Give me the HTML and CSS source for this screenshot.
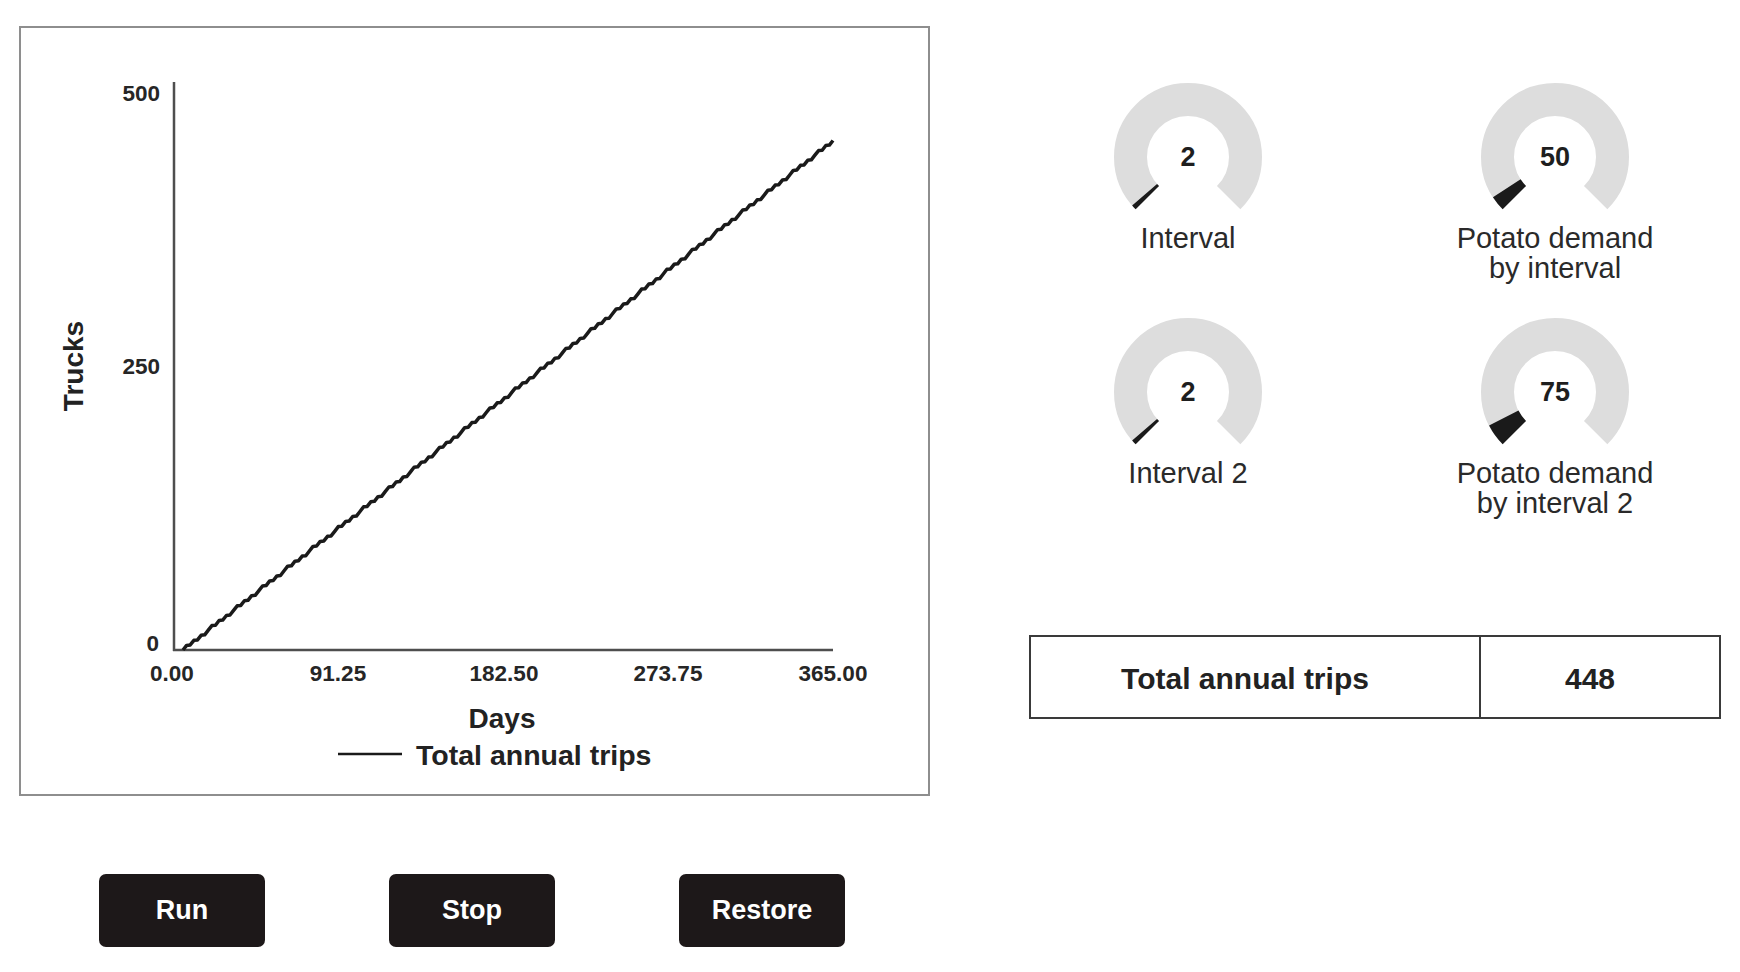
FILE: index.html
```html
<!DOCTYPE html>
<html lang="en">
<head>
  <meta charset="UTF-8" />
  <title>Potato trucks</title>
  <link rel="stylesheet" href="styles.css">
</head>
<body>
  <div class="layout">
    <div class="left-col">
      <div class="chart-box">
        <svg class="chart" width="907" height="766" viewBox="0 0 907 766">
          <line class="axis" x1="153" y1="54" x2="153" y2="623" />
          <line class="axis" x1="152" y1="622" x2="812" y2="622" />

          <text class="tick" x="139" y="65" text-anchor="end">500</text>
          <text class="tick" x="139" y="338" text-anchor="end">250</text>
          <text class="tick" x="138" y="615" text-anchor="end">0</text>

          <text class="tick" x="151" y="645" text-anchor="middle">0.00</text>
          <text class="tick" x="317" y="645" text-anchor="middle">91.25</text>
          <text class="tick" x="483" y="645" text-anchor="middle">182.50</text>
          <text class="tick" x="647" y="645" text-anchor="middle">273.75</text>
          <text class="tick" x="812" y="645" text-anchor="middle">365.00</text>

          <path id="tripsLine" class="series" d="M162 622 L813 113" />

          <text class="axis-title" text-anchor="middle" transform="translate(52 338) rotate(-90)">Trucks</text>
          <text class="axis-title" x="481" y="690" text-anchor="middle">Days</text>

          <line class="series legend-key" x1="317" y1="726" x2="381" y2="726" />
          <text class="legend" x="395" y="727">Total annual trips</text>
        </svg>
      </div>

      <div class="controls">
        <button class="btn">Run</button>
        <button class="btn">Stop</button>
        <button class="btn">Restore</button>
      </div>
    </div>

    <div class="right-col">
      <div class="gauges">
        <div class="gauge">
          <svg class="dial" width="150" height="140" viewBox="0 0 150 140">
            <path class="track" d="M34.34 114.66 A57.5 57.5 0 1 1 115.66 114.66" />
            <path class="fill" d="M34.34 114.66 A57.5 57.5 0 0 1 31.60 111.72" />
            <text class="dial-value" x="75" y="74">2</text>
          </svg>
          <div class="gauge-label">Interval</div>
        </div>

        <div class="gauge">
          <svg class="dial" width="150" height="140" viewBox="0 0 150 140">
            <path class="track" d="M34.34 114.66 A57.5 57.5 0 1 1 115.66 114.66" />
            <path class="fill" d="M34.34 114.66 A57.5 57.5 0 0 1 26.78 105.31" />
            <text class="dial-value" x="75" y="74">50</text>
          </svg>
          <div class="gauge-label">Potato demand<br>by interval</div>
        </div>

        <div class="gauge">
          <svg class="dial" width="150" height="140" viewBox="0 0 150 140">
            <path class="track" d="M34.34 114.66 A57.5 57.5 0 1 1 115.66 114.66" />
            <path class="fill" d="M34.34 114.66 A57.5 57.5 0 0 1 31.60 111.72" />
            <text class="dial-value" x="75" y="74">2</text>
          </svg>
          <div class="gauge-label">Interval 2</div>
        </div>

        <div class="gauge">
          <svg class="dial" width="150" height="140" viewBox="0 0 150 140">
            <path class="track" d="M34.34 114.66 A57.5 57.5 0 1 1 115.66 114.66" />
            <path class="fill" d="M34.34 114.66 A57.5 57.5 0 0 1 23.77 100.11" />
            <text class="dial-value" x="75" y="74">75</text>
          </svg>
          <div class="gauge-label">Potato demand<br>by interval 2</div>
        </div>
      </div>

      <div class="total-table">
        <div class="cell cell-name">Total annual trips</div>
        <div class="cell cell-value">448</div>
      </div>
    </div>
  </div>

  <script>
    // cumulative trips: day 0..365 mapped onto the plot area
    function buildTrips() {
      const px = d => 153 + d * 659 / 365;
      const py = v => 622 - v * 568 / 500;
      const pts = [];
      for (let d = 5; d <= 365; d += 2) {
        const v = (d - 5) * 448 / 360;
        const wobble = (((d * 37) % 7) - 3) * 0.6;
        pts.push(px(d).toFixed(1) + ' ' + (py(v) + wobble).toFixed(1));
      }
      pts[0] = '162 622';
      document.getElementById('tripsLine').setAttribute('d', 'M' + pts.join(' L'));
    }

    buildTrips();
  </script>
</body>
</html>
```

FILE: styles.css
```css
body {
  margin: 0;
  background: #ffffff;
  font-family: 'Liberation Sans', Arial, sans-serif;
  color: #222222;
}

.layout {
  display: flex;
  gap: 99px;
  padding: 26px 0 0 19px;
}

.left-col {
  width: 911px;
  display: flex;
  flex-direction: column;
}

.chart-box {
  width: 911px;
  height: 770px;
  box-sizing: border-box;
  border: 2px solid #8e8e8e;
}

.chart {
  display: block;
}

.chart .axis {
  stroke: #4e4e4e;
  stroke-width: 2.5;
}

.chart .series {
  fill: none;
  stroke: #1a1a1a;
  stroke-width: 3.5;
  stroke-linejoin: round;
}

.chart .legend-key {
  stroke-width: 2.5;
}

.chart .tick {
  font-size: 22.5px;
  font-weight: bold;
  fill: #262626;
  dominant-baseline: central;
}

.chart .axis-title {
  font-size: 28px;
  font-weight: bold;
  fill: #222222;
  dominant-baseline: central;
}

.chart .legend {
  font-size: 28.5px;
  font-weight: bold;
  fill: #222222;
  dominant-baseline: central;
}

.controls {
  display: flex;
  gap: 124px;
  margin-top: 78px;
  padding-left: 80px;
}

.btn {
  width: 166px;
  height: 73px;
  background: #1d1819;
  color: #ffffff;
  border: none;
  border-radius: 7px;
  font-family: 'Liberation Sans', Arial, sans-serif;
  font-size: 27px;
  font-weight: bold;
  cursor: pointer;
}

.right-col {
  width: 692px;
  padding-top: 57px;
}

.gauges {
  display: grid;
  grid-template-columns: 300px 300px;
  column-gap: 67px;
  row-gap: 35px;
  padding-left: 9px;
}

.gauge {
  display: flex;
  flex-direction: column;
  align-items: center;
}

.dial {
  display: block;
}

.dial .track {
  fill: none;
  stroke: #dddddd;
  stroke-width: 33;
}

.dial .fill {
  fill: none;
  stroke: #1a1a1a;
  stroke-width: 33;
}

.dial-value {
  font-size: 27px;
  font-weight: bold;
  fill: #1e1e1e;
  text-anchor: middle;
  dominant-baseline: central;
}

.gauge-label {
  font-size: 29px;
  line-height: 30px;
  text-align: center;
  color: #2a2a2a;
}

.total-table {
  display: flex;
  width: 692px;
  height: 84px;
  box-sizing: border-box;
  margin-top: 117px;
  border: 2px solid #3a3a3a;
}

.cell {
  display: flex;
  align-items: center;
  justify-content: center;
  padding: 3px 20px 0 0;
  font-size: 30px;
  font-weight: bold;
  color: #222222;
}

.cell-name {
  flex: 0 0 450px;
  box-sizing: border-box;
  border-right: 2px solid #3a3a3a;
}

.cell-value {
  flex: 1;
}
```
